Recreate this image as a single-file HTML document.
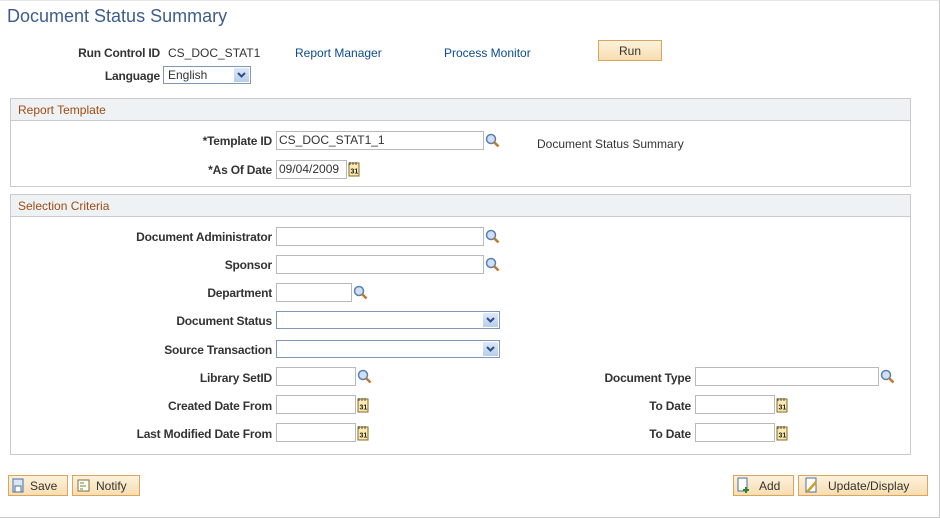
<!DOCTYPE html>
<html><head><meta charset="utf-8"><style>
*{box-sizing:border-box;margin:0;padding:0}
body{width:940px;height:518px;background:#fff;font-family:"Liberation Sans",Arial,sans-serif;font-size:12px;color:#333;position:relative;overflow:hidden}
.frame{position:absolute;left:0;top:0;width:940px;height:518px;border-right:1px solid #c9c9c9;border-bottom:1px solid #c9c9c9;border-top:1px solid #e4e4e4}
.a{position:absolute}
.lbl{position:absolute;font-weight:bold;text-align:right;white-space:nowrap;font-size:12px;color:#333;letter-spacing:-0.2px}
.inp{position:absolute;height:19px;border:1px solid #b9b9b9;background:#fff;font-size:12px;padding:1px 2px;color:#333}
.sel{position:absolute;height:18px;border:1px solid #7f98b4;background:#fff}
.sel .arr{position:absolute;right:1px;top:1px;width:15px;height:14px;background:linear-gradient(#dde8f8,#b8cdeb)}
.link{position:absolute;color:#0b4b91}
.box{position:absolute;border:1px solid #cbcbcb}
.box .hd{height:22px;background:#eff2f4;border-bottom:1px solid #cbcbcb;color:#a14a10;font-size:12px;padding:4px 7px}
.btn{position:absolute;height:21px;border:1px solid #dca55c;background:linear-gradient(#fdf2dc,#f8ddb0);font-size:12px;color:#333;white-space:nowrap}
svg{position:absolute}
</style></head><body>
<div class="frame"></div>
<div class="a" style="left:7px;top:6px;font-size:18px;color:#3d5d8c">Document Status Summary</div>

<div class="lbl" style="right:780px;top:46px">Run Control ID</div>
<div class="a" style="left:168px;top:46px">CS_DOC_STAT1</div>
<div class="link" style="left:295px;top:46px">Report Manager</div>
<div class="link" style="left:444px;top:46px">Process Monitor</div>
<div class="btn" style="left:598px;top:40px;width:64px;text-align:center;padding-top:3px">Run</div>
<div class="lbl" style="right:780px;top:69px">Language</div>
<div class="sel" style="left:163px;top:66px;width:88px"><span style="position:absolute;left:4px;top:1px">English</span><div class="arr"><svg width="15" height="14" viewBox="0 0 15 14"><path d="M4 5l3.5 3.5L11 5" stroke="#2a4d8a" stroke-width="2" fill="none"/></svg></div></div>

<div class="box" style="left:10px;top:98px;width:901px;height:89px"><div class="hd">Report Template</div></div>
<div class="lbl" style="right:668px;top:134px">*Template ID</div>
<div class="inp" style="left:276px;top:131px;width:208px">CS_DOC_STAT1_1</div>
<div class="a" style="left:537px;top:137px">Document Status Summary</div>
<div class="lbl" style="right:668px;top:163px">*As Of Date</div>
<div class="inp" style="left:276px;top:160px;width:71px">09/04/2009</div>

<div class="box" style="left:10px;top:194px;width:901px;height:261px"><div class="hd">Selection Criteria</div></div>
<div class="lbl" style="right:668px;top:230px">Document Administrator</div>
<div class="inp" style="left:276px;top:227px;width:208px"></div>
<div class="lbl" style="right:668px;top:258px">Sponsor</div>
<div class="inp" style="left:276px;top:255px;width:208px"></div>
<div class="lbl" style="right:668px;top:286px">Department</div>
<div class="inp" style="left:276px;top:283px;width:76px"></div>
<div class="lbl" style="right:668px;top:314px">Document Status</div>
<div class="sel" style="left:276px;top:311px;width:224px"><div class="arr"><svg width="15" height="14" viewBox="0 0 15 14"><path d="M4 5l3.5 3.5L11 5" stroke="#2a4d8a" stroke-width="2" fill="none"/></svg></div></div>
<div class="lbl" style="right:668px;top:343px">Source Transaction</div>
<div class="sel" style="left:276px;top:340px;width:224px"><div class="arr"><svg width="15" height="14" viewBox="0 0 15 14"><path d="M4 5l3.5 3.5L11 5" stroke="#2a4d8a" stroke-width="2" fill="none"/></svg></div></div>
<div class="lbl" style="right:668px;top:371px">Library SetID</div>
<div class="inp" style="left:276px;top:367px;width:80px"></div>
<div class="lbl" style="right:668px;top:399px">Created Date From</div>
<div class="inp" style="left:276px;top:395px;width:80px"></div>
<div class="lbl" style="right:668px;top:427px">Last Modified Date From</div>
<div class="inp" style="left:276px;top:423px;width:80px"></div>
<div class="lbl" style="right:249px;top:371px">Document Type</div>
<div class="inp" style="left:695px;top:367px;width:184px"></div>
<div class="lbl" style="right:249px;top:399px">To Date</div>
<div class="inp" style="left:695px;top:395px;width:80px"></div>
<div class="lbl" style="right:249px;top:427px">To Date</div>
<div class="inp" style="left:695px;top:423px;width:80px"></div>

<!-- lookup icons -->
<svg width="0" height="0"><defs>
<g id="lk"><circle cx="6" cy="6" r="4.5" fill="#cfe0f5" stroke="#5a7fb0" stroke-width="1.5"/><path d="M9 9l4.5 4.5" stroke="#c07830" stroke-width="2.5"/></g>
<g id="cal"><rect x="1" y="2" width="10" height="13" fill="#f8eab0" stroke="#8a6a20"/><path d="M2 1v3M5 1v3M8 1v3" stroke="#555"/><text x="2.5" y="12.5" font-size="7" font-family="Liberation Sans" font-weight="bold" fill="#222">31</text></g>
</defs></svg>
<svg style="left:485px;top:133px" width="15" height="15"><use href="#lk"/></svg>
<svg style="left:485px;top:229px" width="15" height="15"><use href="#lk"/></svg>
<svg style="left:485px;top:257px" width="15" height="15"><use href="#lk"/></svg>
<svg style="left:353px;top:285px" width="15" height="15"><use href="#lk"/></svg>
<svg style="left:357px;top:369px" width="15" height="15"><use href="#lk"/></svg>
<svg style="left:880px;top:369px" width="15" height="15"><use href="#lk"/></svg>
<svg style="left:348px;top:161px" width="13" height="16"><use href="#cal"/></svg>
<svg style="left:357px;top:397px" width="13" height="16"><use href="#cal"/></svg>
<svg style="left:357px;top:425px" width="13" height="16"><use href="#cal"/></svg>
<svg style="left:776px;top:397px" width="13" height="16"><use href="#cal"/></svg>
<svg style="left:776px;top:425px" width="13" height="16"><use href="#cal"/></svg>

<div class="btn" style="left:8px;top:475px;width:60px"><svg style="left:3px;top:2px" width="12" height="15"><rect x="1" y="1" width="10" height="13" fill="#dbe6f5" stroke="#4a6fa5"/><rect x="3" y="8" width="6" height="6" fill="#fff" stroke="#4a6fa5"/></svg><span style="position:absolute;left:21px;top:3px">Save</span></div>
<div class="btn" style="left:72px;top:475px;width:68px"><svg style="left:4px;top:3px" width="13" height="13"><rect x="1" y="1" width="11" height="11" fill="#fff" stroke="#8a6a30"/><path d="M3 4h4M3 7h6M3 10h3" stroke="#6a8a30"/></svg><span style="position:absolute;left:23px;top:3px">Notify</span></div>
<div class="btn" style="left:733px;top:475px;width:61px"><svg style="left:3px;top:1px" width="14" height="17"><rect x="1" y="1" width="9" height="13" fill="#fff" stroke="#4a6fa5"/><path d="M9 10v6M6 13h6" stroke="#2a8a2a" stroke-width="2"/></svg><span style="position:absolute;left:25px;top:3px">Add</span></div>
<div class="btn" style="left:798px;top:475px;width:130px"><svg style="left:5px;top:1px" width="16" height="17"><rect x="2" y="1" width="10" height="14" fill="#fff" stroke="#4a6fa5"/><path d="M3 15L12 5" stroke="#d0a020" stroke-width="2.5"/></svg><span style="position:absolute;left:29px;top:3px">Update/Display</span></div>
</body></html>
